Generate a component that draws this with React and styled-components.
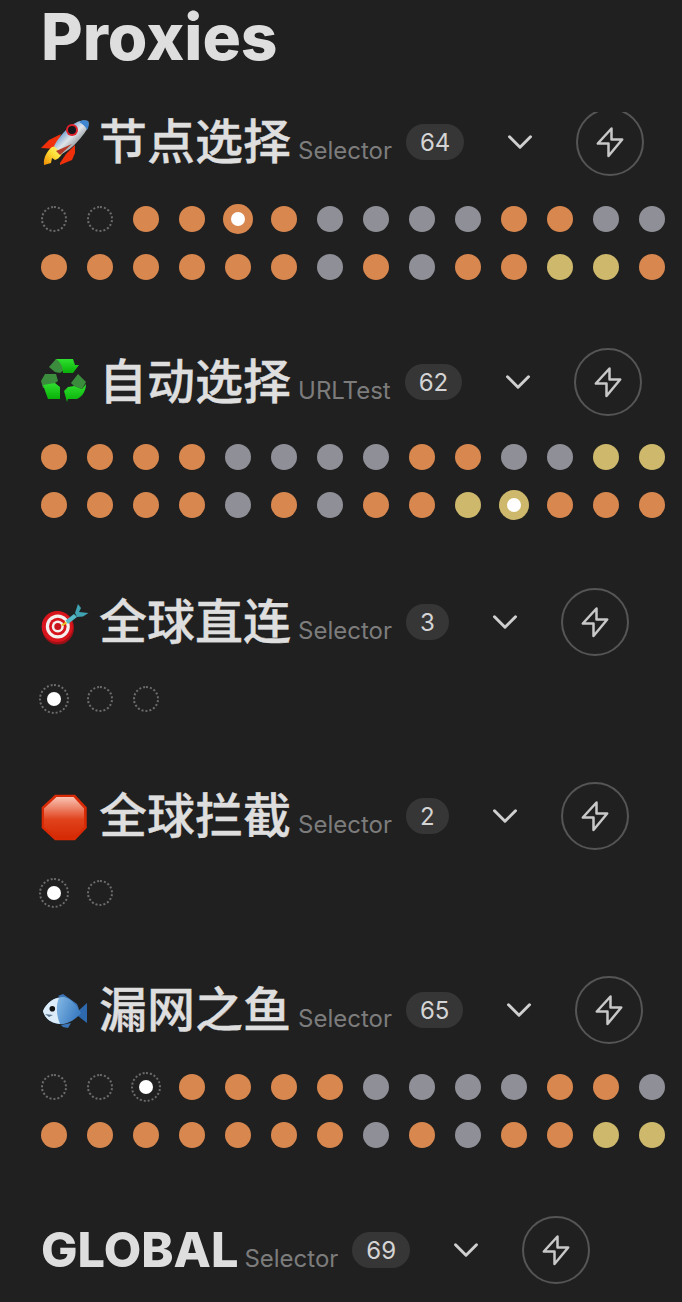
import React from "react";
import styled, { createGlobalStyle } from "styled-components";
import { ChevronDown } from "lucide-react";

const GlobalStyle = createGlobalStyle`
  html, body {
    margin: 0;
    padding: 0;
    background: #202020;
  }
`;

const Page = styled.div`
  width: 682px;
  height: 1302px;
  display: flex;
  flex-direction: column;
  overflow: hidden;
  background: #202020;
  color: #dedede;
  font-family: Inter, "Noto Sans CJK SC", sans-serif;
`;
const Heading = styled.h1`
  flex: none;
  height: 112px;
  margin: 0;
  padding-left: 41px;
  font-size: 64px;
  line-height: 74px;
  font-weight: 800;
  color: #dedede;
`;
const List = styled.div`
  flex: 1;
  overflow: hidden;
`;
const Section = styled.section`
  display: flex;
  flex-direction: column;
  gap: 32px;
  padding: 0 0 72px 41px;
`;
const Header = styled.div`
  display: flex;
  align-items: center;
  height: 60px;
`;
const TitleGroup = styled.div`
  display: flex;
  align-items: baseline;
  gap: ${({ $latin }) => ($latin ? 6 : 7)}px;
`;
const Title = styled.h2`
  margin: 0;
  font-size: ${({ $latin }) => ($latin ? 48.6 : 48)}px;
  line-height: 60px;
  font-weight: ${({ $latin }) => ($latin ? 800 : 500)};
  -webkit-text-stroke: ${({ $latin }) => ($latin ? 0 : 0.35)}px #dedede;
  white-space: nowrap;
  color: #dedede;
`;
const Emoji = styled.svg`
  width: 48px;
  height: 48px;
  margin-right: 10px;
  vertical-align: -8px;
`;
const Kind = styled.span`
  font-size: 24px;
  line-height: 30px;
  font-weight: 400;
  color: #7c7c7c;
`;
const Count = styled.span`
  display: flex;
  align-items: center;
  justify-content: center;
  height: 36px;
  margin-left: 14px;
  padding: 0 14px;
  border-radius: 18px;
  background: #363636;
  font-size: 24px;
  color: #d4d4d4;
`;
const Expand = styled.button`
  display: flex;
  align-items: center;
  justify-content: center;
  width: 48px;
  height: 48px;
  margin-left: 32px;
  padding: 0;
  border: 0;
  background: none;
  color: #cfcfcf;
`;
const Test = styled.button`
  flex: none;
  display: flex;
  align-items: center;
  justify-content: center;
  box-sizing: border-box;
  width: 68px;
  height: 68px;
  margin-left: 32px;
  padding: 0;
  border: 2px solid #555;
  border-radius: 50%;
  background: none;
  color: #c8c8c8;
`;
const Dots = styled.div`
  display: flex;
  flex-wrap: wrap;
  align-items: center;
  gap: 20px;
  width: 630px;
`;
const colors = { o: "#d8874f", g: "#8f9097", y: "#cdb86c" };
const Dot = styled.span`
  box-sizing: border-box;
  display: flex;
  align-items: center;
  justify-content: center;
  width: ${({ $on }) => ($on ? 30 : 26)}px;
  height: ${({ $on }) => ($on ? 30 : 26)}px;
  margin: 0 ${({ $on }) => ($on ? -2 : 0)}px;
  border-radius: 50%;
  background: ${({ $kind }) => colors[$kind] || "transparent"};
  border: ${({ $kind }) => (colors[$kind] ? "0" : "2px dotted #6c6c6c")};
`;
const Pip = styled.span`
  width: 14px;
  height: 14px;
  border-radius: 50%;
  background: #fff;
`;

const Bolt = () => (
  <svg width="30" height="32" viewBox="0 0 30 32" fill="none" stroke="currentColor" strokeWidth="2.5" strokeLinejoin="round">
    <path d="M16.5 2.5 2.8 17.5H13.5V30L27.2 13.5H16.5Z" />
  </svg>
);

const Rocket = () => (
  <Emoji viewBox="0 0 48 48">
    <defs>
      <linearGradient id="rb" x1="0.2" y1="0.2" x2="0.85" y2="0.85">
        <stop offset="0" stopColor="#3f7fc6" />
        <stop offset="0.45" stopColor="#dfe4e8" />
        <stop offset="1" stopColor="#5d6468" />
      </linearGradient>
      <linearGradient id="rf" x1="0" y1="1" x2="1" y2="0">
        <stop offset="0" stopColor="#f08a00" />
        <stop offset="0.5" stopColor="#ffe13a" />
        <stop offset="1" stopColor="#fff6a8" />
      </linearGradient>
    </defs>
    <path d="M0 29 8 21 20 15 15 30Z" fill="#f0300a" />
    <path d="M19 46 19 44 25 35 34 26 34 34 31 41Z" fill="#f0300a" />
    <path d="M3 46C2 38 7 31 11 28L24 25C23 33 19 40 14 41L11 39 10 44Z" fill="url(#rf)" />
    <path d="M47 2C41 0 33 3 25 11 19 17 15 23 13 27L21 35C26 32 32 28 37 22 45 13 49 7 47 2Z" fill="url(#rb)" />
    <path d="M47 2C44 1 41 1 38 3 42 5 45 8 46 11 48 8 48 5 47 2Z" fill="#3f86d0" />
    <path d="M15 32 31 25 19 36Z" fill="#b63a28" />
    <circle cx="31" cy="11" r="6" fill="#e0202a" />
    <circle cx="31" cy="11" r="4" fill="#14161c" />
  </Emoji>
);

const Recycle = () => (
  <Emoji viewBox="0 0 48 48">
    <defs>
      <linearGradient id="cg" x1="0" y1="0" x2="0" y2="1">
        <stop offset="0" stopColor="#2fe02f" />
        <stop offset="1" stopColor="#08b008" />
      </linearGradient>
    </defs>
    <path d="M8 8 15 0H22L27 8 19 14 14 13Z" fill="#3c8c3e" />
    <path d="M15 0H32L34 6H38L32 14H22C22 9 20 3 15 0Z" fill="url(#cg)" />
    <path d="M0 22 4 15H15L17 22 14 24 2 29Z" fill="#3c8c3e" />
    <path d="M2 26 14 24 19 28V40H7Z" fill="url(#cg)" />
    <path d="M30 24 37 15 45 23 41 30 33 27Z" fill="#3c8c3e" />
    <path d="M23 32 27 28 33 27 41 30 45 25C45 32 41 38 36 40H27L26 43Z" fill="url(#cg)" />
  </Emoji>
);

const Dart = () => (
  <Emoji viewBox="0 0 48 48">
    <ellipse cx="17" cy="29" rx="16" ry="16.5" fill="#9e1016" />
    <circle cx="16.3" cy="27.5" r="15.6" fill="#d8141c" />
    <circle cx="16.8" cy="27.5" r="12" fill="#f4f0ee" />
    <circle cx="16.8" cy="27.5" r="8.8" fill="#d8141c" />
    <circle cx="16.8" cy="27.5" r="6" fill="#f4f0ee" />
    <circle cx="16.8" cy="27.5" r="3.5" fill="#c8141c" />
    <path d="M20 26 25 22.5 26 24.5 21.5 27Z" fill="#e8c020" />
    <path d="M24.5 21.5 33 15 36 18 27 25Z" fill="#55b9c8" />
    <path d="M34 14 37 5 40 9 38 13 47.5 14 42 17.5 36 18Z" fill="#3fa3b4" />
  </Emoji>
);

const Stop = () => (
  <Emoji viewBox="0 0 48 48">
    <defs>
      <linearGradient id="sg" x1="0" y1="0" x2="0" y2="1">
        <stop offset="0" stopColor="#f9c4b4" />
        <stop offset="0.55" stopColor="#e0421c" />
        <stop offset="1" stopColor="#d42a04" />
      </linearGradient>
    </defs>
    <path d="M14 1.7H34L45.7 14.3V35L34 47.3H14L.7 35V14.3Z" fill="#d92a06" />
    <path d="M15.5 4H32.5L43 15.5V34L32.5 45H15.5L3 34V15.5Z" fill="url(#sg)" />
  </Emoji>
);

const Fish = () => (
  <Emoji viewBox="0 0 48 48">
    <defs>
      <linearGradient id="fb" x1="0" y1="0" x2="1" y2="0.3">
        <stop offset="0" stopColor="#a9d8f6" />
        <stop offset="1" stopColor="#3f7fc4" />
      </linearGradient>
    </defs>
    <path d="M17 9 22 7 36 17 38 22Z" fill="#3d76b8" />
    <path d="M36 25 46 16V36L37 29Z" fill="#2e69ad" />
    <path d="M20 38 30 36 27 41 22 40Z" fill="#3d76b8" />
    <path d="M2 24C6 15 15 9 23 10 31 12 36 19 40 26 34 33 26 38 18 37 9 36 4 31 2 24Z" fill="url(#fb)" />
    <path d="M2 24C6 15 13 11 18 11 15 17 15 28 19 37 9 36 4 31 2 24Z" fill="#dcecf8" />
    <path d="M4 27 12 28 8 30Z" fill="#5d7690" />
    <circle cx="11.3" cy="21.7" r="2.8" fill="#111" />
  </Emoji>
);

const groups = [
  {
    icon: <Rocket />, name: "节点选择", kind: "Selector", count: 64, on: 4,
    dots: "eeooooggggoogg" + "oooooogogooyyo",
  },
  {
    icon: <Recycle />, name: "自动选择", kind: "URLTest", count: 62, on: 24,
    dots: "ooooggggooggyy" + "oooogogooyyooo",
  },
  { icon: <Dart />, name: "全球直连", kind: "Selector", count: 3, on: 0, dots: "eee" },
  { icon: <Stop />, name: "全球拦截", kind: "Selector", count: 2, on: 0, dots: "ee" },
  {
    icon: <Fish />, name: "漏网之鱼", kind: "Selector", count: 65, on: 2,
    dots: "eeeoooo" + "ggggoog" + "ooooooogogooyy",
  },
  { name: "GLOBAL", kind: "Selector", count: 69, latin: true, dots: "" },
];

function App() {
  return (
    <Page>
      <GlobalStyle />
      <Heading>Proxies</Heading>
      <List>
        {groups.map((group) => (
          <Section key={group.name}>
            <Header>
              <TitleGroup $latin={group.latin}>
                <Title $latin={group.latin}>
                  {group.icon}
                  {group.name}
                </Title>
                <Kind>{group.kind}</Kind>
              </TitleGroup>
              <Count>{group.count}</Count>
              <Expand aria-label="expand">
                <ChevronDown size={42} strokeWidth={1.7} />
              </Expand>
              <Test aria-label="test">
                <Bolt />
              </Test>
            </Header>
            {group.dots && (
              <Dots>
                {group.dots.split("").map((kind, i) => (
                  <Dot key={i} $kind={kind} $on={i === group.on}>
                    {i === group.on && <Pip />}
                  </Dot>
                ))}
              </Dots>
            )}
          </Section>
        ))}
      </List>
    </Page>
  );
}

export default App;
